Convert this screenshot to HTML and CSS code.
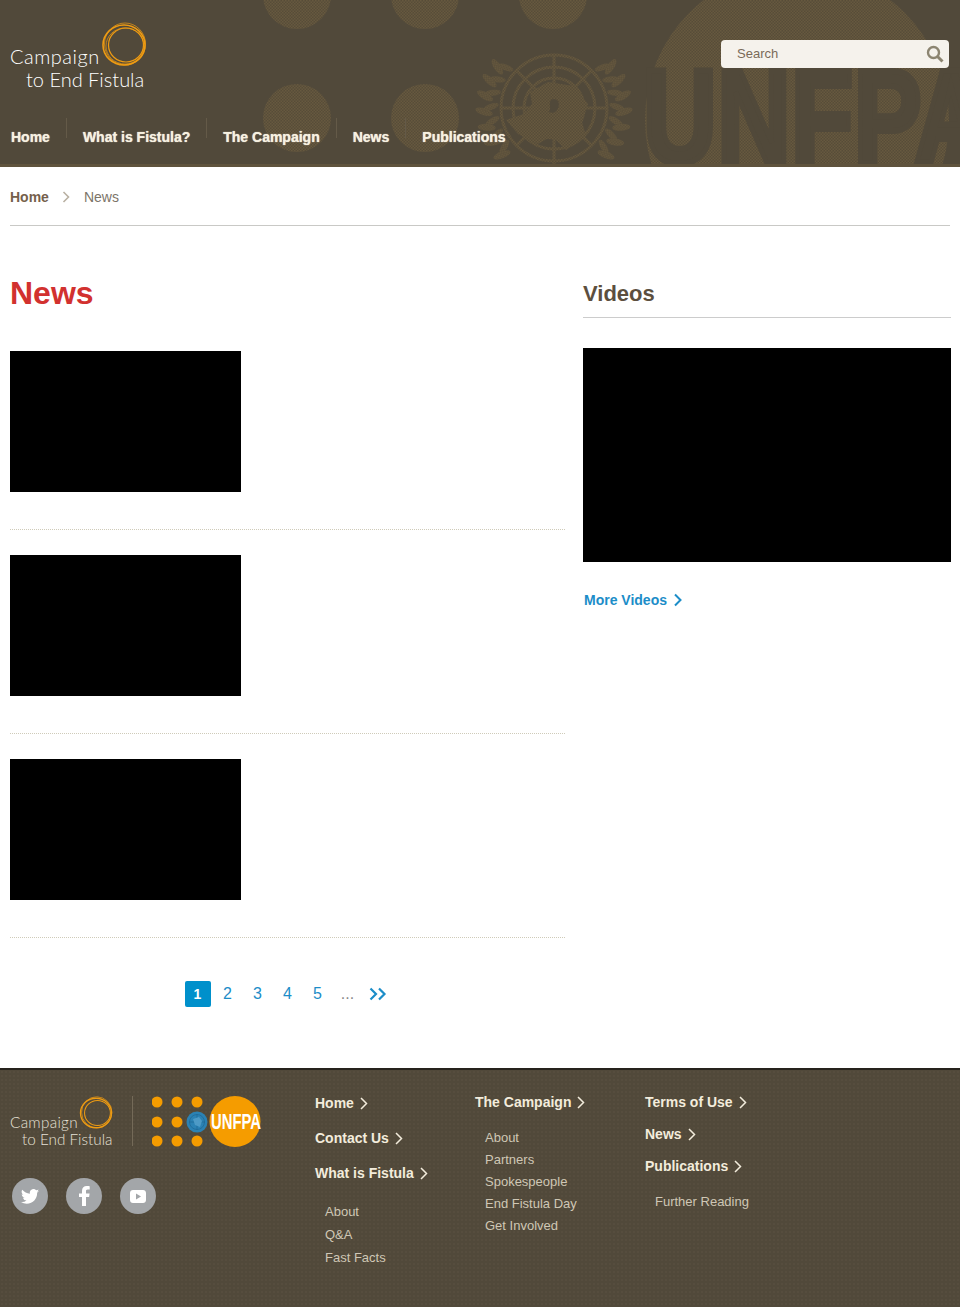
FILE: index.html
```html
<!DOCTYPE html>
<html lang="en">
<head>
  <meta charset="UTF-8">
  <meta name="viewport" content="width=device-width, initial-scale=1.0">
  <title>News | Campaign to End Fistula</title>
  <link rel="stylesheet" href="styles.css">
</head>
<body>

  <header class="site-header">
    <!-- background artwork -->
    <svg class="header-art" width="960" height="164" viewBox="0 0 960 164">
      <defs>
        <pattern id="weave" width="3" height="3" patternUnits="userSpaceOnUse">
          <rect width="3" height="3" fill="#574c38"/>
          <rect width="1.5" height="1.5" fill="#67593f"/>
          <rect x="1.5" y="1.5" width="1.5" height="1.5" fill="#67593f"/>
        </pattern>
        <g id="wreath" fill="url(#weave)">
          <ellipse cx="554" cy="38" rx="3.5" ry="9" transform="rotate(-54 554 108) rotate(20 554 38)"/>
          <ellipse cx="554" cy="38" rx="3.5" ry="9" transform="rotate(-67 554 108) rotate(20 554 38)"/>
          <ellipse cx="554" cy="38" rx="3.5" ry="9" transform="rotate(-80 554 108) rotate(20 554 38)"/>
          <ellipse cx="554" cy="38" rx="3.5" ry="9" transform="rotate(-93 554 108) rotate(20 554 38)"/>
          <ellipse cx="554" cy="38" rx="3.5" ry="9" transform="rotate(-106 554 108) rotate(20 554 38)"/>
          <ellipse cx="554" cy="38" rx="3.5" ry="9" transform="rotate(-119 554 108) rotate(20 554 38)"/>
          <ellipse cx="554" cy="38" rx="3.5" ry="9" transform="rotate(-132 554 108) rotate(20 554 38)"/>
          <ellipse cx="554" cy="45" rx="3" ry="8" transform="rotate(-50 554 108) rotate(-20 554 45)"/>
          <ellipse cx="554" cy="45" rx="3" ry="8" transform="rotate(-63 554 108) rotate(-20 554 45)"/>
          <ellipse cx="554" cy="45" rx="3" ry="8" transform="rotate(-76 554 108) rotate(-20 554 45)"/>
          <ellipse cx="554" cy="45" rx="3" ry="8" transform="rotate(-89 554 108) rotate(-20 554 45)"/>
          <ellipse cx="554" cy="45" rx="3" ry="8" transform="rotate(-102 554 108) rotate(-20 554 45)"/>
          <ellipse cx="554" cy="45" rx="3" ry="8" transform="rotate(-115 554 108) rotate(-20 554 45)"/>
          <ellipse cx="554" cy="45" rx="3" ry="8" transform="rotate(-128 554 108) rotate(-20 554 45)"/>
        </g>
      </defs>
      <g fill="url(#weave)">
        <circle cx="297" cy="-5" r="34"/>
        <circle cx="425" cy="-5" r="34"/>
        <circle cx="553" cy="-5" r="34"/>
        <circle cx="297" cy="118" r="34"/>
        <circle cx="425" cy="118" r="34"/>
        <circle cx="797" cy="120" r="152"/>
      </g>
      <text x="643" y="163" class="art-letters" textLength="345" lengthAdjust="spacingAndGlyphs">UNFPA</text>
      <use href="#wreath"/>
      <use href="#wreath" transform="translate(1108 0) scale(-1 1)"/>
      <g fill="none" stroke="url(#weave)" stroke-width="3">
        <circle cx="554" cy="108" r="53"/>
        <circle cx="554" cy="108" r="41"/>
        <circle cx="554" cy="108" r="30"/>
        <path d="M554 55V164M501 108H607M517 71L591 145M591 71L517 145"/>
      </g>
      <path fill="url(#weave)" d="M530 92L548 82L574 86L588 104L582 122L586 136L566 150L552 136L538 144L518 134L506 120L524 114L532 104Z"/>
      <path fill="#51493a" d="M551 100C556 97 561 102 558 108C557 112 553 114 549 112C552 108 548 104 551 100Z"/>
    </svg>

    <div class="header-top">
      <a class="logo" href="#">
        <svg class="logo-ring" viewBox="0 0 46 46">
          <g fill="none" stroke="#ee9b12">
            <ellipse cx="23" cy="23" rx="21" ry="20" stroke-width="1.6"/>
            <ellipse cx="24" cy="22" rx="20.5" ry="21" stroke-width=".7"/>
            <ellipse cx="24" cy="24" rx="19" ry="18" stroke-width=".7"/>
            <ellipse cx="25" cy="23" rx="17.5" ry="17" stroke-width="1.2"/>
          </g>
        </svg>
        <span class="logo-line logo-first">Campaign</span>
        <span class="logo-line logo-indent">to End Fistula</span>
      </a>
      <div class="search">
        <span class="search-label">Search</span>
        <svg width="18" height="18" viewBox="0 0 18 18">
          <circle cx="7.5" cy="7.5" r="5.5" fill="none" stroke="#8c8571" stroke-width="2.4"/>
          <path d="M11.5 11.5L16.5 16.5" stroke="#8c8571" stroke-width="3"/>
        </svg>
      </div>
    </div>

    <nav class="main-nav">
      <a href="#">Home</a>
      <a href="#">What is Fistula?</a>
      <a href="#">The Campaign</a>
      <a href="#">News</a>
      <a href="#">Publications</a>
    </nav>
  </header>

  <div class="breadcrumb">
    <a href="#">Home</a>
    <svg class="chevron" width="8" height="12" viewBox="0 0 8 12"><path d="M1.5 1L6.5 6L1.5 11" fill="none" stroke="#b9b0a2" stroke-width="1.6"/></svg>
    <span class="crumb-current">News</span>
  </div>

  <main class="content">
    <section class="news-col">
      <h1>News</h1>
      <article class="news-item"><div class="news-thumb"></div></article>
      <article class="news-item"><div class="news-thumb"></div></article>
      <article class="news-item"><div class="news-thumb"></div></article>

      <div class="pager">
        <a class="current" href="#">1</a>
        <a href="#">2</a>
        <a href="#">3</a>
        <a href="#">4</a>
        <a href="#">5</a>
        <span>...</span>
        <a href="#">
          <svg width="18" height="14" viewBox="0 0 18 14"><path d="M1.5 1.5L7 7L1.5 12.5M10 1.5L15.5 7L10 12.5" fill="none" stroke="#1c8dc8" stroke-width="2.2"/></svg>
        </a>
      </div>
    </section>

    <aside class="video-col">
      <h2>Videos</h2>
      <div class="video-box"></div>
      <a class="more-link" href="#">More Videos
        <svg width="8" height="14" viewBox="0 0 8 14"><path d="M1 1.5L6.5 7L1 12.5" fill="none" stroke="#1c8dc8" stroke-width="2"/></svg>
      </a>
    </aside>
  </main>

  <footer class="site-footer">
    <div class="footer-brand">
      <div class="footer-logos">
        <a class="logo logo-small" href="#">
          <svg class="logo-ring" viewBox="0 0 46 46">
            <g fill="none" stroke="#ee9b12">
              <ellipse cx="23" cy="23" rx="21" ry="20" stroke-width="1.8"/>
              <ellipse cx="24" cy="22" rx="20.5" ry="21" stroke-width=".9"/>
              <ellipse cx="25" cy="23" rx="17.5" ry="17" stroke-width="1.4"/>
            </g>
          </svg>
          <span class="logo-line logo-first">Campaign</span>
          <span class="logo-line logo-indent">to End Fistula</span>
        </a>
        <svg class="unfpa-logo" width="112" height="52" viewBox="0 0 112 52">
          <g fill="#f59c00">
            <circle cx="5" cy="7" r="5.5"/><circle cx="25" cy="7" r="5.5"/><circle cx="45" cy="7" r="5.5"/>
            <circle cx="5" cy="27" r="5.5"/><circle cx="25" cy="27" r="5.5"/>
            <circle cx="5" cy="46" r="5.5"/><circle cx="25" cy="46" r="5.5"/><circle cx="45" cy="46" r="5.5"/>
            <circle cx="83" cy="26.5" r="25.5"/>
          </g>
          <circle cx="45" cy="27" r="10.5" fill="#2b82b4"/>
          <g fill="none" stroke="#1f6a98" stroke-width=".8">
            <circle cx="45" cy="27" r="7.5"/>
            <path d="M45 19V35M37 27H53"/>
          </g>
          <path fill="#4d9ac6" d="M41 24L47 22L50 26L48 32L43 30Z"/>
          <text x="59" y="34" class="unfpa-word" textLength="50" lengthAdjust="spacingAndGlyphs">UNFPA</text>
        </svg>
      </div>
      <div class="social">
        <a href="#" aria-label="Twitter">
          <svg width="18" height="15" viewBox="0 0 24 20"><path fill="#fff" d="M24 2.400a9.800 9.800 0 0 1-2.800.8 4.900 4.900 0 0 0 2.200-2.700 9.800 9.800 0 0 1-3.100 1.200 4.900 4.900 0 0 0-8.400 4.500A13.900 13.900 0 0 1 1.700 1a4.900 4.900 0 0 0 1.500 6.600 4.900 4.900 0 0 1-2.200-.6c0 2.400 1.700 4.400 3.900 4.900a4.900 4.900 0 0 1-2.200.1 4.900 4.900 0 0 0 4.600 3.400A9.900 9.900 0 0 1 0 17.400 13.900 13.900 0 0 0 7.500 19.600c9.100 0 14.300-7.700 14-14.600A10 10 0 0 0 24 2.400z"/></svg>
        </a>
        <a href="#" aria-label="Facebook">
          <svg width="11" height="20" viewBox="0 0 11 20"><path fill="#fff" d="M3 20V11H0V7.500H3V5C3 1.800 4.900 0 7.800 0C9.200 0 10.400.1 10.700.2V3.400H8.800C7.300 3.400 7 4.100 7 5.200V7.500H10.600L10.100 11H7V20Z"/></svg>
        </a>
        <a href="#" aria-label="YouTube">
          <svg width="16" height="13" viewBox="0 0 16 13"><path fill="#fff" fill-rule="evenodd" d="M3 0H13C14.700 0 16 1.300 16 3V10C16 11.700 14.700 13 13 13H3C1.300 13 0 11.700 0 10V3C0 1.300 1.300 0 3 0ZM6 3.500V9.500L11 6.500Z"/></svg>
        </a>
      </div>
    </div>

    <div class="footer-col col-home">
      <a class="foot-head" href="#">Home <svg width="8" height="13" viewBox="0 0 8 13"><path d="M1 1L6.5 6.500L1 12" fill="none" stroke="#f3ecdc" stroke-width="1.500"/></svg></a>
      <a class="foot-head" href="#">Contact Us <svg width="8" height="13" viewBox="0 0 8 13"><path d="M1 1L6.5 6.500L1 12" fill="none" stroke="#f3ecdc" stroke-width="1.500"/></svg></a>
      <a class="foot-head" href="#">What is Fistula <svg width="8" height="13" viewBox="0 0 8 13"><path d="M1 1L6.5 6.500L1 12" fill="none" stroke="#f3ecdc" stroke-width="1.500"/></svg></a>
      <ul class="foot-links">
        <li><a href="#">About</a></li>
        <li><a href="#">Q&amp;A</a></li>
        <li><a href="#">Fast Facts</a></li>
      </ul>
    </div>

    <div class="footer-col col-campaign">
      <a class="foot-head" href="#">The Campaign <svg width="8" height="13" viewBox="0 0 8 13"><path d="M1 1L6.5 6.500L1 12" fill="none" stroke="#f3ecdc" stroke-width="1.500"/></svg></a>
      <ul class="foot-links">
        <li><a href="#">About</a></li>
        <li><a href="#">Partners</a></li>
        <li><a href="#">Spokespeople</a></li>
        <li><a href="#">End Fistula Day</a></li>
        <li><a href="#">Get Involved</a></li>
      </ul>
    </div>

    <div class="footer-col col-terms">
      <a class="foot-head" href="#">Terms of Use <svg width="8" height="13" viewBox="0 0 8 13"><path d="M1 1L6.5 6.500L1 12" fill="none" stroke="#f3ecdc" stroke-width="1.500"/></svg></a>
      <a class="foot-head" href="#">News <svg width="8" height="13" viewBox="0 0 8 13"><path d="M1 1L6.5 6.500L1 12" fill="none" stroke="#f3ecdc" stroke-width="1.500"/></svg></a>
      <a class="foot-head" href="#">Publications <svg width="8" height="13" viewBox="0 0 8 13"><path d="M1 1L6.5 6.500L1 12" fill="none" stroke="#f3ecdc" stroke-width="1.500"/></svg></a>
      <ul class="foot-links">
        <li><a href="#">Further Reading</a></li>
      </ul>
    </div>
  </footer>

</body>
</html>
```

FILE: styles.css
```css
body {
  font-family: "Liberation Sans", Arial, sans-serif;
  background-color: #fff;
  margin: 0;
  padding: 0;
}

a {
  text-decoration: none;
}

/* Header */
.site-header {
  position: relative;
  height: 164px;
  background-color: #51493a;
  border-bottom: 3px solid #5f533d;
  overflow: hidden;
}

.header-art {
  position: absolute;
  left: 0;
  top: 0;
}

.art-letters {
  fill: #51493a;
  stroke: #51493a;
  stroke-width: 6px;
  font-family: "Liberation Sans", sans-serif;
  font-weight: bold;
  font-size: 134px;
}

.header-top {
  position: relative;
  display: flex;
  justify-content: space-between;
  align-items: flex-start;
  height: 118px;
  padding: 0 11px 0 10px;
}

.logo {
  position: relative;
  display: block;
  width: 140px;
  padding-top: 45px;
  color: #fff;
  font-family: Lato, "Open Sans", sans-serif;
  font-weight: 300;
  font-size: 20px;
  line-height: 23px;
}

.logo-ring {
  position: absolute;
  left: 91px;
  top: 22px;
  width: 46px;
  height: 46px;
}

.logo-line {
  display: block;
  white-space: nowrap;
}

.logo-first {
  letter-spacing: 0.5px;
}

.logo-indent {
  margin-left: 16px;
}

.search {
  display: flex;
  justify-content: space-between;
  align-items: center;
  box-sizing: border-box;
  width: 228px;
  height: 28px;
  margin-top: 40px;
  padding: 0 5px 0 16px;
  background-color: #f5f2ec;
  border-radius: 4px;
  color: #7a6a58;
  font-size: 13px;
}

.search-label {
  margin-top: -2px;
}

.main-nav {
  position: relative;
  display: flex;
  padding-left: 11px;
}

/* the divider is shorter than the line and sits above the text */
.main-nav a {
  color: #f7f1e1;
  font-weight: bold;
  font-size: 14px;
  line-height: 38px;
  height: 20px;
  padding-right: 16px;
  margin-right: 16px;
  border-right: 1px solid #645a48;
  text-shadow: 0 0 1px #f7f1e1;
}

.main-nav a:last-child {
  border-right: none;
}

/* Breadcrumb */
.breadcrumb {
  display: flex;
  align-items: center;
  gap: 13px;
  height: 57px;
  padding-top: 1px;
  margin: 0 10px;
  border-bottom: 1px solid #c9c9c6;
  font-size: 14px;
  color: #7c7468;
}

.breadcrumb a {
  color: #75604b;
  font-weight: bold;
}

.crumb-current {
  margin-left: 1px;
}

/* Content */
.content {
  display: flex;
  padding: 0 9px 0 10px;
}

.news-col {
  width: 555px;
  margin-right: 18px;
}

.news-col h1 {
  margin: 0;
  padding-top: 48px;
  height: 77px;
  color: #d2312f;
  font-size: 32px;
  line-height: 38px;
}

.news-item {
  padding-bottom: 37px;
  margin-bottom: 25px;
  border-bottom: 1px dotted #cfcbb9;
}

.news-thumb {
  width: 231px;
  height: 141px;
  background-color: #000;
}

.pager {
  display: flex;
  justify-content: center;
  gap: 4px;
  margin-top: 43px;
  height: 87px;
  font-size: 16px;
}

.pager a, .pager span {
  display: flex;
  justify-content: center;
  align-items: center;
  width: 26px;
  height: 26px;
  color: #1c8dc8;
}

.pager span {
  color: #8a8a8a;
}

.pager .current {
  background-color: #0090cb;
  color: #fff;
  font-weight: bold;
  font-size: 14px;
  border-radius: 2px;
}

.video-col {
  width: 368px;
}

.video-col h2 {
  margin: 0;
  padding-top: 55px;
  height: 36px;
  color: #5c4f3e;
  font-size: 22px;
  line-height: 26px;
  border-bottom: 1px solid #ccc;
}

.video-box {
  height: 214px;
  margin-top: 30px;
  background-color: #000;
}

.more-link {
  display: flex;
  align-items: center;
  gap: 7px;
  margin: 30px 0 0 1px;
  color: #1c8dc8;
  font-weight: bold;
  font-size: 14px;
  line-height: 16px;
}

/* Footer */
.site-footer {
  display: flex;
  box-sizing: border-box;
  height: 239px;
  background-color: #51493a;
  background-image: radial-gradient(#564d3e 1px, transparent 1px);
  background-size: 4px 4px;
  border-top: 2px solid #26231d;
}

.footer-brand {
  width: 315px;
  padding: 26px 0 0 10px;
  box-sizing: border-box;
}

.footer-logos {
  display: flex;
  height: 50px;
}

.logo-small {
  flex: none;
  width: 123px;
  height: 50px;
  padding-top: 18px;
  box-sizing: border-box;
  border-right: 1px solid #746a58;
  color: #e6e1d6;
  font-size: 15.3px;
  line-height: 17px;
}

.logo-small .logo-first {
  letter-spacing: 0.3px;
}

.logo-small .logo-ring {
  left: 69px;
  top: 0;
  width: 34px;
  height: 34px;
}

.logo-small .logo-indent {
  margin-left: 12px;
}

.unfpa-logo {
  flex: none;
  margin: -1px 0 0 19px;
}

.unfpa-word {
  fill: #fff;
  font-family: "Liberation Sans", sans-serif;
  font-weight: bold;
  font-size: 22px;
}

.social {
  display: flex;
  gap: 18px;
  margin: 32px 0 0 2px;
}

.social a {
  display: flex;
  justify-content: center;
  align-items: center;
  width: 36px;
  height: 36px;
  border-radius: 50%;
  background-color: #a3a6a9;
}

.footer-col {
  display: flex;
  flex-direction: column;
  align-items: flex-start;
  font-size: 14px;
}

.col-home {
  width: 160px;
  padding-top: 25px;
  gap: 19px;
}

.col-campaign {
  width: 170px;
  padding-top: 24px;
}

.col-terms {
  padding-top: 24px;
  gap: 16px;
}

.foot-head {
  display: flex;
  align-items: center;
  gap: 6px;
  height: 16px;
  color: #f3ecdc;
  font-weight: bold;
}

.foot-links {
  list-style-type: none;
  margin: 0;
  padding: 0 0 0 10px;
  font-size: 13px;
}

.foot-links a {
  color: #cfc7b5;
}

.col-home .foot-links {
  margin-top: 4px;
}

.col-home .foot-links li {
  height: 23px;
  line-height: 16px;
}

.col-campaign .foot-links {
  margin-top: 20px;
}

.col-campaign .foot-links li {
  height: 22px;
  line-height: 16px;
}

.col-terms .foot-links {
  margin-top: 4px;
  line-height: 16px;
}
```
